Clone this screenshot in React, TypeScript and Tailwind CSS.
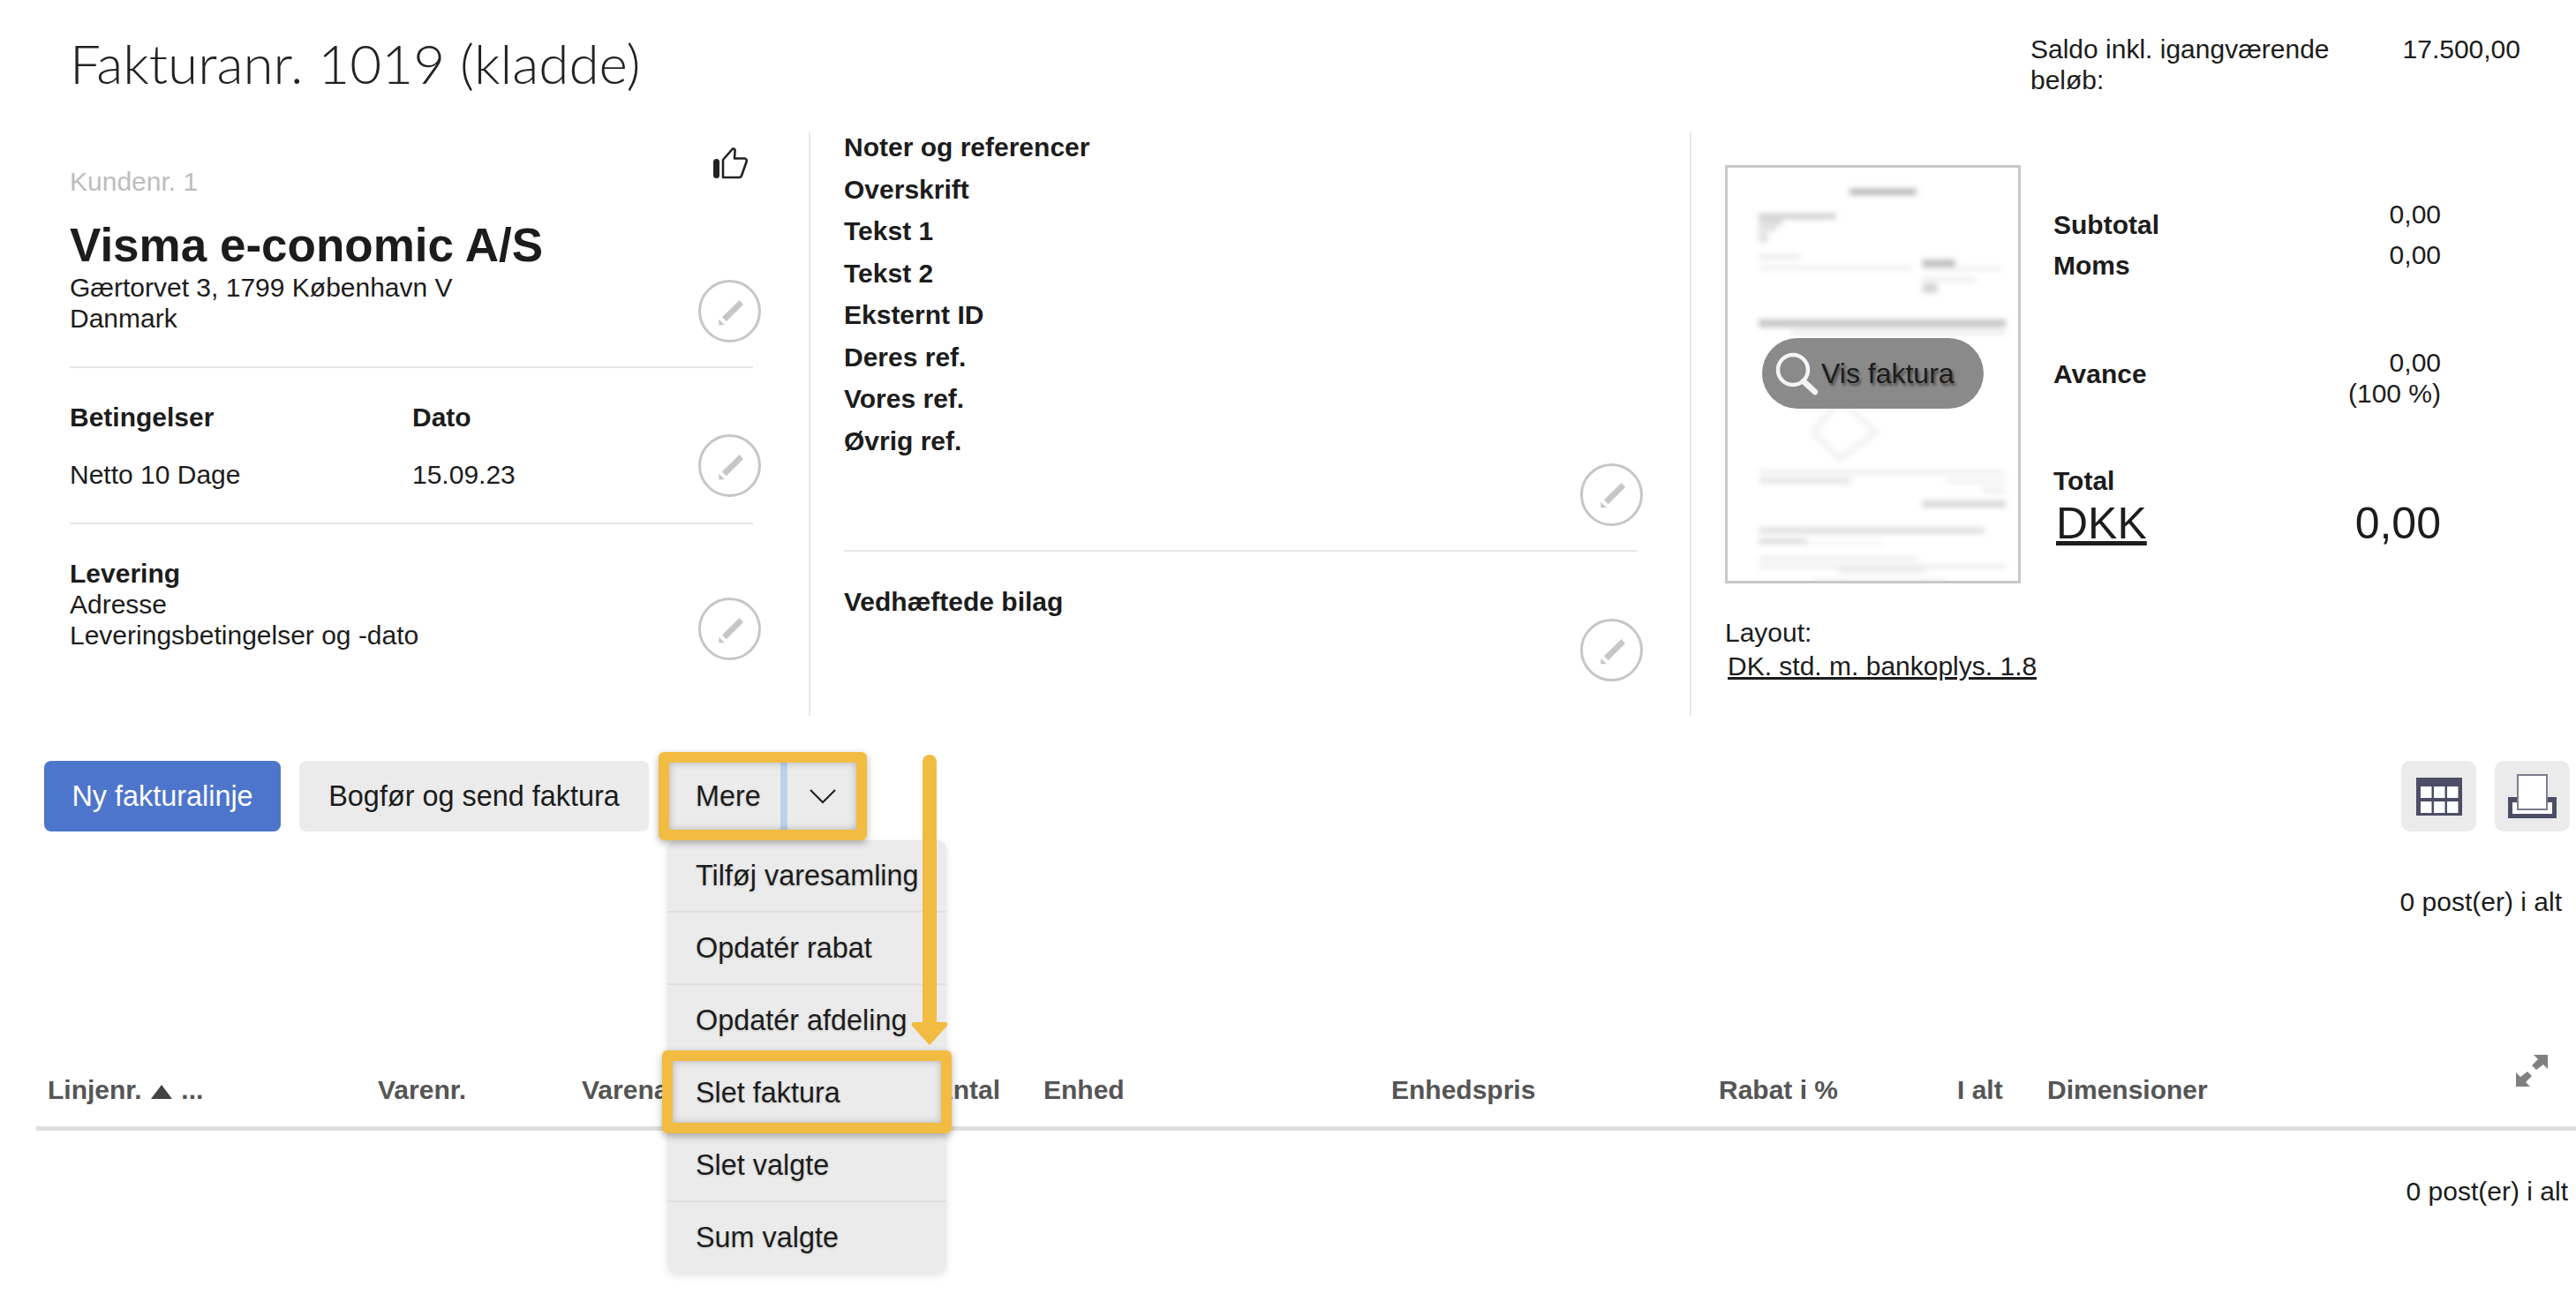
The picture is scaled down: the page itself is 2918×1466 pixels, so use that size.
import React from "react";

function Pencil() {
  return (
    <div className="flex h-[71px] w-[71px] shrink-0 items-center justify-center rounded-full border-[3px] border-[#c6c6c6] bg-white">
      <svg width="34" height="34" viewBox="0 0 34 34">
        <path d="M27.7 4 L32 9 L12.7 28.3 L8 23.3 Z" fill="#c6c6c6" />
        <path d="M4.3 25.7 V32.3 H11 Z" fill="#c6c6c6" />
      </svg>
    </div>
  );
}

function Thumb() {
  return (
    <svg width="40" height="36" viewBox="0 0 40 36" fill="none">
      <rect x="0" y="13" width="7" height="22" rx="3.5" fill="#222" />
      <path d="M11 34 V14 L22 1.5 Q25 1 24.5 4.5 L24 12.5 H35.5 Q38.5 13 37.5 16.5 L32 32 Q31.5 34 29 34 Z" stroke="#222" strokeWidth="2.6" strokeLinejoin="round" />
    </svg>
  );
}

function DocThumb() {
  const z = (x1: number, x2: number, y1: number, y2: number, o: number) => (
    <rect key={`${x1}-${y1}`} x={x1 / 2.97 - 5} y={y1 / 2.97 - 3} width={(x2 - x1) / 2.97} height={(y2 - y1) / 2.97} fill="#000" opacity={o * 0.6} />
  );
  return (
    <svg width="329" height="468" viewBox="0 0 329 468" className="block">
      <defs>
        <filter id="docblur" x="-10%" y="-10%" width="120%" height="120%">
          <feGaussianBlur stdDeviation="3" />
        </filter>
      </defs>
      <g filter="url(#docblur)">
        {z(425, 650, 80, 100, 0.5)}
        {z(120, 380, 165, 180, 0.4)}
        {z(120, 200, 185, 200, 0.3)}
        {z(120, 180, 205, 220, 0.25)}
        {z(120, 150, 225, 260, 0.2)}
        {z(120, 260, 305, 315, 0.2)}
        {z(120, 640, 340, 350, 0.16)}
        {z(670, 780, 320, 340, 0.5)}
        {z(670, 940, 345, 352, 0.2)}
        {z(670, 850, 380, 390, 0.18)}
        {z(670, 720, 400, 430, 0.3)}
        {z(120, 950, 520, 545, 0.4)}
        {z(230, 950, 555, 570, 0.14)}
        {z(120, 950, 1030, 1040, 0.16)}
        {z(120, 430, 1055, 1070, 0.22)}
        {z(750, 950, 1060, 1070, 0.16)}
        {z(870, 950, 1090, 1100, 0.2)}
        {z(670, 950, 1130, 1150, 0.3)}
        {z(120, 880, 1220, 1240, 0.22)}
        {z(120, 280, 1260, 1272, 0.35)}
        {z(280, 540, 1272, 1280, 0.12)}
        {z(120, 650, 1318, 1328, 0.18)}
        {z(120, 950, 1345, 1355, 0.18)}
        {z(390, 680, 1360, 1370, 0.2)}
        {z(300, 750, 1395, 1408, 0.14)}
        <path d="M127 262 L168 300 L127 330 L97 300 Z M155 262 L170 250" stroke="#000" strokeOpacity="0.07" strokeWidth="5" fill="none" />
      </g>
    </svg>
  );
}

function Magnifier() {
  return (
    <svg width="50" height="52" viewBox="0 0 50 52" fill="none" className="shrink-0">
      <circle cx="21" cy="22" r="17" stroke="#f4f4f4" strokeWidth="4.5" fill="#8a8a8a" />
      <path d="M33 35 L46 47" stroke="#f4f4f4" strokeWidth="6.5" strokeLinecap="round" />
    </svg>
  );
}

function TableIcon() {
  return (
    <svg width="52" height="43" viewBox="0 0 52 43">
      <rect width="52" height="43" fill="#4b4e64" />
      {[5, 20, 35].map((x) =>
        [10, 27].map((y) => <rect key={`${x}-${y}`} x={x} y={y} width="12.5" height="13" fill="#fff" />)
      )}
    </svg>
  );
}

function PrintIcon() {
  return (
    <svg width="55" height="50" viewBox="0 0 55 50" fill="none">
      <path d="M0 26 H55 V50 H0 Z" fill="#4b4e64" />
      <rect x="5" y="32" width="45" height="13" fill="#fff" />
      <rect x="11" y="1" width="33" height="39" fill="#fff" stroke="#7c7e90" strokeWidth="2" />
    </svg>
  );
}

function ExpandIcon() {
  return (
    <svg width="36" height="36" viewBox="0 0 36 36" fill="#808080">
      <path d="M20 0 H36 V16 L31 11 L23 17 L18 12 L25 5 Z" />
      <path d="M0 36 V20 L5 25 L13 19 L18 24 L11 31 L16 36 Z" />
    </svg>
  );
}

const refs = ["Noter og referencer", "Overskrift", "Tekst 1", "Tekst 2", "Eksternt ID", "Deres ref.", "Vores ref.", "Øvrig ref."];
const cols: [string, string][] = [
  ["Linjenr.", "w-[374px]"],
  ["Varenr.", "w-[231px]"],
  ["Varenavn", "w-[399px]"],
  ["Antal", "w-[124px]"],
  ["Enhed", "w-[394px]"],
  ["Enhedspris", "w-[371px]"],
  ["Rabat i %", "w-[270px]"],
  ["I alt", "w-[102px]"],
  ["Dimensioner", "w-[300px]"],
];
const menu = ["Tilføj varesamling", "Opdatér rabat", "Opdatér afdeling", "Slet faktura", "Slet valgte", "Sum valgte"];

export default function App() {
  return (
    <div className="relative h-[1466px] w-[2918px] overflow-hidden bg-white font-['Liberation_Sans',Arial,sans-serif] text-[30px] leading-[35px] text-[#1c1c1c]">
      {/* Header */}
      <div className="flex h-[149px] items-start justify-between pr-[63px]">
        <h1 className="mt-[33px] pl-[79px] font-['Lato',sans-serif] text-[62px] font-light leading-[76px] text-[#222]">Fakturanr. 1019 (kladde)</h1>
        <div className="mt-[38px] flex w-[555px] justify-between">
          <div className="w-[360px]">Saldo inkl. igangværende beløb:</div>
          <div>17.500,00</div>
        </div>
      </div>

      {/* Info */}
      <div className="flex h-[662px]">
        <div className="w-[918px] shrink-0 border-r-2 border-[#e8e8e8] pl-[79px] pr-[63px]">
          <div className="flex h-[268px] flex-col border-b-2 border-[#e6e6e6]">
            <div className="mt-[20px] flex items-start justify-between pr-[5px]">
              <div className="mt-[19px] text-[#bdbdbd]">Kundenr. 1</div>
              <div className="mr-[0px] mt-[-2px]"><Thumb /></div>
            </div>
            <div className="mt-[24px] text-[53px] font-bold leading-[62px]">Visma e-conomic A/S</div>
            <div className="flex items-start justify-between">
              <div className="mt-[-1px]">Gærtorvet 3, 1799 København V<br />Danmark</div>
              <div className="mr-[-9px] mt-[8px]"><Pencil /></div>
            </div>
          </div>
          <div className="flex h-[177px] justify-between border-b-2 border-[#e6e6e6] pt-[38px]">
            <div className="w-[388px]">
              <div className="font-bold">Betingelser</div>
              <div className="mt-[30px]">Netto 10 Dage</div>
            </div>
            <div className="flex-1">
              <div className="font-bold">Dato</div>
              <div className="mt-[30px]">15.09.23</div>
            </div>
            <div className="mr-[-9px] mt-[37px]"><Pencil /></div>
          </div>
          <div className="flex justify-between pt-[38px]">
            <div>
              <div className="font-bold">Levering</div>
              <div>Adresse</div>
              <div>Leveringsbetingelser og -dato</div>
            </div>
            <div className="mr-[-9px] mt-[45px]"><Pencil /></div>
          </div>
        </div>

        <div className="w-[998px] shrink-0 border-r-2 border-[#e8e8e8] pl-[38px] pr-[60px]">
          <div className="h-[476px] border-b-2 border-[#e6e6e6]">
            <div className="flex flex-col gap-[12.5px] font-bold">
              {refs.map((r) => <div key={r}>{r}</div>)}
            </div>
            <div className="mr-[-7px] mt-[8px] flex justify-end"><Pencil /></div>
          </div>
          <div className="mt-[39px] font-bold">Vedhæftede bilag</div>
          <div className="mr-[-7px] mt-[2px] flex justify-end"><Pencil /></div>
        </div>

        <div className="flex flex-1 pl-[38px]">
          <div className="w-[372px] shrink-0">
            <div className="relative mt-[38px] h-[474px] w-[335px] border-[3px] border-[#c8c8c8] bg-white">
              <DocThumb />
              <div className="absolute left-[39px] top-[193px] flex h-[80px] w-[251px] items-center gap-[3px] rounded-[40px] bg-[#8a8a8a] pl-[14px] text-[32px] [text-shadow:2px_3px_3px_rgba(0,0,0,0.45)]">
                <Magnifier />
                <span>Vis faktura</span>
              </div>
            </div>
            <div className="mt-[38px]">Layout:</div>
            <div className="ml-[3px] mt-[3px] whitespace-nowrap underline">DK. std. m. bankoplys. 1.8</div>
          </div>
          <div className="w-[439px] pt-[89px]">
            <div className="flex items-start justify-between">
              <div className="mt-[-1px] font-bold">Subtotal</div>
              <div className="mt-[-13px]">0,00</div>
            </div>
            <div className="mt-[11px] flex items-start justify-between">
              <div className="font-bold">Moms</div>
              <div className="mt-[-12px]">0,00</div>
            </div>
            <div className="mt-[82px] flex items-start justify-between">
              <div className="mt-[6px] font-bold">Avance</div>
              <div className="mt-[-7px] text-right">0,00<br />(100 %)</div>
            </div>
            <div className="mt-[64px] font-bold">Total</div>
            <div className="mt-[2px] flex items-center justify-between text-[50px] leading-[58px]">
              <span className="ml-[3px] underline">DKK</span>
              <span>0,00</span>
            </div>
          </div>
        </div>
      </div>

      {/* Toolbar */}
      <div className="mt-[51px] flex h-[80px] items-stretch pl-[50px] pr-[7px] text-[32.4px]">
        <div className="flex w-[268px] items-center justify-center rounded-[8px] bg-[#4d75cc] text-white">Ny fakturalinje</div>
        <div className="ml-[21px] flex w-[396px] items-center justify-center rounded-[8px] bg-[#ebebeb]">Bogfør og send faktura</div>
        <div className="ml-[21px] flex w-[216px] rounded-[4px] bg-[#ebebeb] [text-shadow:0_1px_3px_rgba(0,0,0,0.15)]">
          <div className="flex w-[128px] items-center pl-[32px]">Mere</div>
          <div className="w-[8px] bg-[#bcd2ea]"></div>
          <div className="flex flex-1 items-center justify-center">
            <svg width="32" height="18" viewBox="0 0 32 18" fill="none"><path d="M2 2 L16 16 L30 2" stroke="#222" strokeWidth="2.2" /></svg>
          </div>
        </div>
        <div className="ml-auto flex h-[80px] w-[85px] items-center justify-center rounded-[10px] bg-[#ebebeb]"><TableIcon /></div>
        <div className="ml-[21px] flex h-[80px] w-[85px] items-center justify-center rounded-[10px] bg-[#ebebeb]"><PrintIcon /></div>
      </div>

      <div className="mt-[62px] pr-[16px] text-right">0 post(er) i alt</div>

      {/* Table */}
      <div className="ml-[41px] mt-[150px] flex h-[92px] border-b-[5px] border-[#dedede] font-bold text-[#555]">
        <div className="flex flex-1 items-start pl-[13px] pt-[28px]">
          {cols.map(([c, w], i) => (
            <div key={c} className={`${w} shrink-0 whitespace-nowrap`}>
              {c}
              {i === 0 && (
                <span className="font-bold">
                  {" "}<svg width="24" height="16" viewBox="0 0 24 16" className="mx-[2px] inline-block align-baseline"><path d="M12 0 L24 16 H0 Z" fill="#444" /></svg> ...
                </span>
              )}
            </div>
          ))}
        </div>
        <div className="absolute left-[2850px] top-[1195px]"><ExpandIcon /></div>
      </div>

      <div className="mt-[51px] pr-[9px] text-right">0 post(er) i alt</div>

      {/* Dropdown overlay */}
      <div className="absolute left-[756px] top-[952px] w-[316px] rounded-[10px] bg-[#ebebeb] text-[32.4px] shadow-[0_3px_8px_rgba(0,0,0,0.12)] [text-shadow:0_1px_3px_rgba(0,0,0,0.15)]">
        {menu.map((m, i) => (
          <div key={m} className={`flex items-center whitespace-nowrap pl-[32px] ${i < 5 ? "h-[82px] border-b-2 border-[#dedede]" : "h-[80px]"}`}>{m}</div>
        ))}
      </div>

      {/* Annotation overlays */}
      <div className="absolute left-[746px] top-[852px] h-[100px] w-[236px] rounded-[6px] border-[12px] border-[#f2bb42] shadow-[0_3px_8px_rgba(0,0,0,0.3),inset_0_0_8px_rgba(0,0,0,0.25)]"></div>
      <div className="absolute left-[750px] top-[1190px] h-[94px] w-[328px] rounded-[6px] border-[12px] border-[#f2bb42] shadow-[0_3px_8px_rgba(0,0,0,0.3),inset_0_0_8px_rgba(0,0,0,0.25)]"></div>
      <svg className="absolute left-[1030px] top-[852px]" width="44" height="334" viewBox="0 0 44 334" fill="#f2bb42">
        <rect x="15" y="3" width="16" height="310" rx="8" />
        <path d="M5 306 H41 C43 306 44 308 43 310 L25 330 C24 332 22 332 21 330 L3 310 C2 308 3 306 5 306 Z" />
      </svg>
    </div>
  );
}
